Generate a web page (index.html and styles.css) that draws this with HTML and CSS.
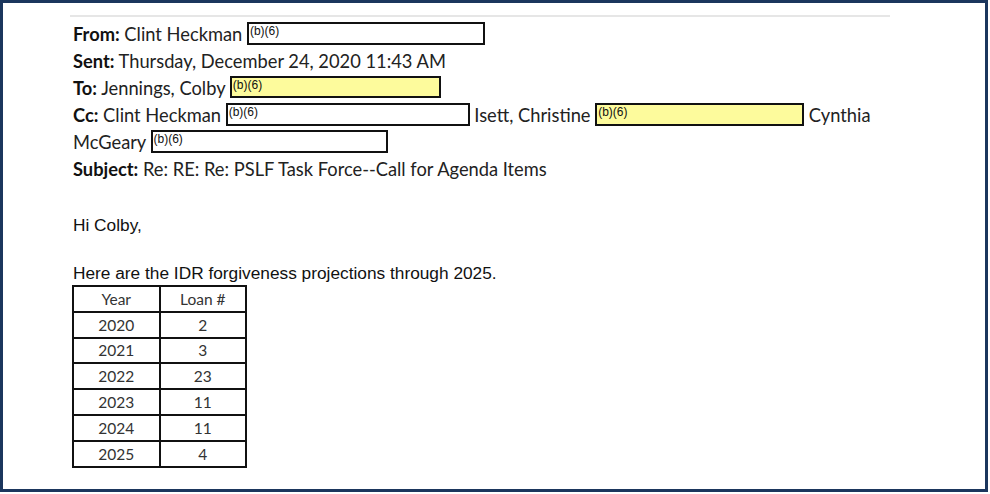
FILE: index.html
```html
<!DOCTYPE html>
<html>
<head>
<meta charset="utf-8">
<link rel="stylesheet" href="styles.css">
</head>
<body>
<div class="frame">
  <div class="rule"></div>
  <div class="header">
    <div class="line"><b>From:</b> Clint Heckman <span class="redact w-from">(b)(6)</span></div>
    <div class="line"><b>Sent:</b> Thursday, December 24, 2020 11:43 AM</div>
    <div class="line"><b>To:</b> Jennings, Colby <span class="redact yellow w-to">(b)(6)</span></div>
    <div class="line"><b>Cc:</b> Clint Heckman <span class="redact w-cc">(b)(6)</span> Isett, Christine <span class="redact yellow w-isett">(b)(6)</span> Cynthia McGeary <span class="redact w-mcg">(b)(6)</span></div>
    <div class="line"><b>Subject:</b> Re: RE: Re: PSLF Task Force--Call for Agenda Items</div>
  </div>
  <div class="body">
    <p class="greet">Hi Colby,</p>
    <p class="intro">Here are the IDR forgiveness projections through 2025.</p>
    <table class="data">
      <tr><td>Year</td><td>Loan #</td></tr>
      <tr><td>2020</td><td>2</td></tr>
      <tr><td>2021</td><td>3</td></tr>
      <tr><td>2022</td><td>23</td></tr>
      <tr><td>2023</td><td>11</td></tr>
      <tr><td>2024</td><td>11</td></tr>
      <tr><td>2025</td><td>4</td></tr>
    </table>
  </div>
</div>
</body>
</html>
```

FILE: styles.css
```css
html, body {
  margin: 0;
  padding: 0;
  background: #ffffff;
}
.frame {
  box-sizing: border-box;
  width: 988px;
  height: 492px;
  border: 3px solid #1b365d;
  background: #fff;
  padding-left: 67px;
}
.rule {
  margin-top: 12px;
  width: 820px;
  height: 2px;
  background: #e6e6e6;
}
.header {
  width: 820px;
  margin-top: 4px;
  padding-left: 3px;
  font-family: Lato, "Open Sans", sans-serif;
  font-size: 18.3px;
  line-height: 27px;
  color: #222;
}
.header b {
  font-weight: 700;
  color: #111;
}
.redact {
  display: inline-block;
  box-sizing: border-box;
  height: 23px;
  border: 2px solid #111;
  background: #fff;
  font-family: "Liberation Sans", Arial, sans-serif;
  font-size: 12px;
  line-height: 14px;
  color: #111;
  vertical-align: 6px;
  padding-left: 1px;
  text-align: left;
}
.redact.yellow { background: #fdfb9c; }
.w-from { width: 238px; }
.w-to { width: 211px; height: 22px; }
.w-cc { width: 244px; }
.w-isett { width: 209px; }
.w-mcg { width: 237px; }
.body {
  padding-left: 3px;
  font-family: "Liberation Sans", Arial, sans-serif;
  font-size: 17.3px;
  color: #111;
}
.greet {
  margin: 32px 0 0;
  line-height: 20px;
}
.intro {
  margin: 28px 0 0;
  line-height: 20px;
}
.data {
  border-collapse: collapse;
  margin-top: 2px;
  margin-left: -1px;
  font-family: Lato, "Open Sans", sans-serif;
  font-size: 15.5px;
  color: #333;
}
.data td {
  border: 2px solid #111;
  width: 84.5px;
  height: 23.8px;
  padding: 0;
  text-align: center;
  line-height: 22px;
}
```
